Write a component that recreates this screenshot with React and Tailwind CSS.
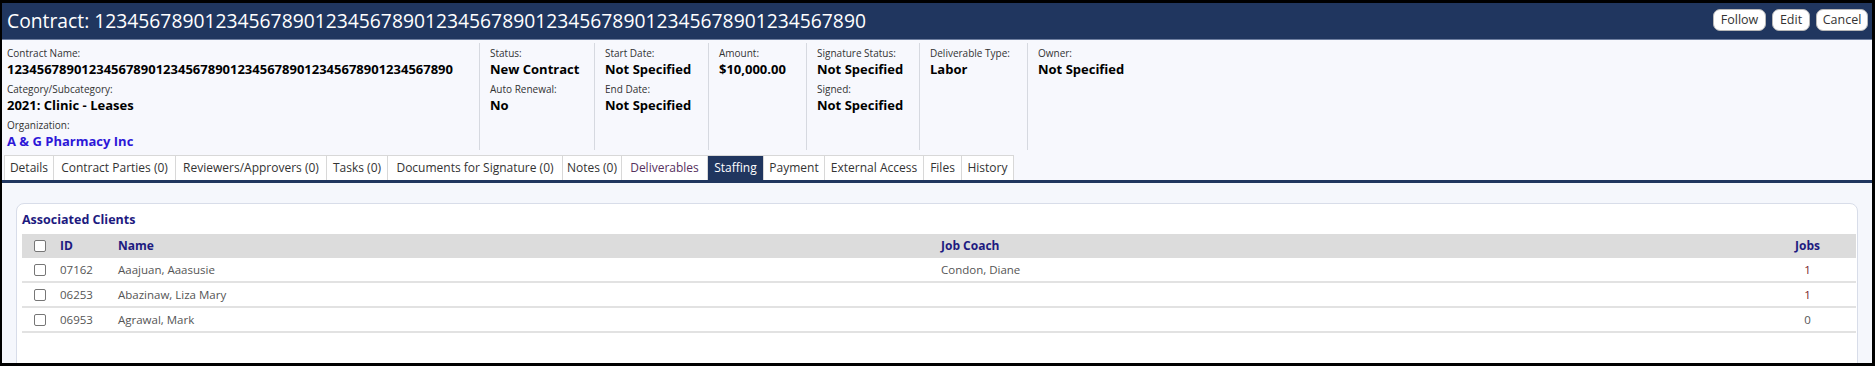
import React from "react";

const font = { fontFamily: '"Open Sans", "Noto Sans", sans-serif' };

const info = [
    {
        w: "w-[478px]",
        pl: "pl-[5px]",
        items: [
            { label: "Contract Name:", value: "123456789012345678901234567890123456789012345678901234567890" },
            { label: "Category/Subcategory:", value: "2021: Clinic - Leases" },
            { label: "Organization:", value: "A & G Pharmacy Inc", link: true },
        ],
    },
    {
        w: "w-[115px]",
        pl: "pl-[10px]",
        items: [
            { label: "Status:", value: "New Contract" },
            { label: "Auto Renewal:", value: "No" },
        ],
    },
    {
        w: "w-[114px]",
        pl: "pl-[10px]",
        items: [
            { label: "Start Date:", value: "Not Specified" },
            { label: "End Date:", value: "Not Specified" },
        ],
    },
    {
        w: "w-[98px]",
        pl: "pl-[10px]",
        items: [{ label: "Amount:", value: "$10,000.00" }],
    },
    {
        w: "w-[113px]",
        pl: "pl-[10px]",
        items: [
            { label: "Signature Status:", value: "Not Specified" },
            { label: "Signed:", value: "Not Specified" },
        ],
    },
    {
        w: "w-[108px]",
        pl: "pl-[10px]",
        items: [{ label: "Deliverable Type:", value: "Labor" }],
    },
    {
        w: "w-[200px]",
        pl: "pl-[10px]",
        last: true,
        items: [{ label: "Owner:", value: "Not Specified" }],
    },
];

const tabs = [
    { name: "Details", w: "w-[50px]" },
    { name: "Contract Parties (0)", w: "w-[122px]" },
    { name: "Reviewers/Approvers (0)", w: "w-[151px]" },
    { name: "Tasks (0)", w: "w-[61px]" },
    { name: "Documents for Signature (0)", w: "w-[175px]" },
    { name: "Notes (0)", w: "w-[59px]" },
    { name: "Deliverables", w: "w-[86px]", visited: true },
    { name: "Staffing", w: "w-[56px]", active: true },
    { name: "Payment", w: "w-[61px]" },
    { name: "External Access", w: "w-[99px]" },
    { name: "Files", w: "w-[38px]" },
    { name: "History", w: "w-[52px]" },
];

const clients = [
    { id: "07162", name: "Aaajuan, Aaasusie", coach: "Condon, Diane", jobs: 1 },
    { id: "06253", name: "Abazinaw, Liza Mary", coach: "", jobs: 1 },
    { id: "06953", name: "Agrawal, Mark", coach: "", jobs: 0 },
];

function Checkbox() {
    return (
        <span className="ml-[12px] block w-[12px] h-[12px] rounded-[2px] border border-[#767676] bg-white"></span>
    );
}

export default function App() {
    return (
        <div
            className="w-[1875px] h-[366px] bg-black pt-[3px] pl-[2px] pr-[3px] pb-[3px] overflow-hidden"
            style={font}
        >
            <div className="h-full flex flex-col bg-[#f5f7fc] overflow-hidden">
                {/* header */}
                <div className="h-[37px] shrink-0 bg-[#20365f] border-b border-[#6f7fa0] flex items-center justify-between pl-[5px] pr-[4px]">
                    <h1 className="text-[19.3px] text-white leading-none">
                        Contract: 1234567890123456789012345678901234567890123456789012345678901234567890
                    </h1>
                    <div className="flex gap-[6px] mt-[-2px]">
                        {["Follow", "Edit", "Cancel"].map((b, i) => (
                            <button
                                key={b}
                                className={`h-[22px] rounded-[7px] bg-white border border-[#b8b8b8] text-[12.5px] text-[#333] ${
                                    i === 0 ? "w-[53px]" : i === 1 ? "w-[38px]" : "w-[52px]"
                                }`}
                            >
                                {b}
                            </button>
                        ))}
                    </div>
                </div>

                {/* info */}
                <div className="shrink-0 bg-[#f7f8fd] flex pt-[3px] pb-[5px]">
                    {info.map((col, ci) => (
                        <div
                            key={ci}
                            className={`${col.w} ${col.pl} pt-[3px] ${col.last ? "" : "border-r border-[#d6d9e0]"}`}
                        >
                            {col.items.map((it, ii) => (
                                <div key={ii} className={ii > 0 ? "mt-[4px]" : ""}>
                                    <div className="text-[10px] leading-[14px] text-[#333]">{it.label}</div>
                                    <div
                                        className={`text-[13px] leading-[18px] font-bold whitespace-nowrap ${
                                            it.link ? "text-[#2d17d8]" : "text-black"
                                        }`}
                                    >
                                        {it.value}
                                    </div>
                                </div>
                            ))}
                        </div>
                    ))}
                </div>

                {/* tabs */}
                <div className="shrink-0 flex pl-[2px] bg-[#f7f8fd]">
                    {tabs.map((t) => (
                        <div
                            key={t.name}
                            className={`${t.w} h-[25px] flex items-center justify-center text-[12px] whitespace-nowrap border-t border-r border-[#d8d8d8] first:border-l ${
                                t.active
                                    ? "bg-[#20365f] text-white border-[#20365f]"
                                    : t.visited
                                    ? "bg-white text-[#56305e]"
                                    : "bg-white text-[#333]"
                            }`}
                        >
                            {t.name}
                        </div>
                    ))}
                </div>
                <div className="h-[3px] shrink-0 bg-[#20365f]"></div>

                {/* staffing panel */}
                <div className="mt-[20px] mx-[14px] bg-white border border-[#d8dde9] rounded-[8px] pl-[5px] pr-[1px] pt-[7px] h-[200px] shrink-0">
                    <div className="text-[12.5px] leading-[18px] font-bold text-[#1d1a80]">
                        Associated Clients
                    </div>
                    <div className="mt-[5px]">
                        <div className="grid grid-cols-[38px_58px_823px_1fr_97px] items-center h-[24px] bg-[#dcdcdc] text-[12px] font-bold text-[#1d1a80]">
                            <Checkbox />
                            <div>ID</div>
                            <div>Name</div>
                            <div>Job Coach</div>
                            <div className="text-center">Jobs</div>
                        </div>
                        {clients.map((c) => (
                            <div
                                key={c.id}
                                className="grid grid-cols-[38px_58px_823px_1fr_97px] items-center h-[25px] border-b-2 border-[#e2e2e2] text-[11.5px] text-[#555]"
                            >
                                <Checkbox />
                                <div>{c.id}</div>
                                <div>{c.name}</div>
                                <div>{c.coach}</div>
                                <div className={`text-center ${c.jobs ? "text-[#7a1f2b]" : "text-[#555]"}`}>
                                    {c.jobs}
                                </div>
                            </div>
                        ))}
                    </div>
                </div>
            </div>
        </div>
    );
}
